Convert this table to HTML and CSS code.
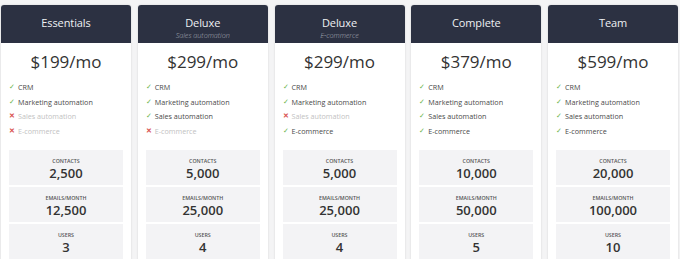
FILE: index.html
```html
<!DOCTYPE html>
<html>
<head>
<meta charset="utf-8">
<link rel="stylesheet" href="styles.css">
</head>
<body>
<div class="plans">
  <div class="card">
    <div class="head"><div class="title">Essentials</div></div>
    <div class="price">$199/mo</div>
    <ul class="features">
      <li class="yes"><span class="mk">✓</span>CRM</li>
      <li class="yes"><span class="mk">✓</span>Marketing automation</li>
      <li class="no"><span class="mk">✕</span>Sales automation</li>
      <li class="no"><span class="mk">✕</span>E-commerce</li>
    </ul>
    <div class="stats">
      <div class="stat"><div class="label">Contacts</div><div class="num">2,500</div></div>
      <div class="stat"><div class="label">Emails/Month</div><div class="num">12,500</div></div>
      <div class="stat"><div class="label">Users</div><div class="num">3</div></div>
    </div>
  </div>
  <div class="card">
    <div class="head"><div class="title">Deluxe</div><div class="sub">Sales automation</div></div>
    <div class="price">$299/mo</div>
    <ul class="features">
      <li class="yes"><span class="mk">✓</span>CRM</li>
      <li class="yes"><span class="mk">✓</span>Marketing automation</li>
      <li class="yes"><span class="mk">✓</span>Sales automation</li>
      <li class="no"><span class="mk">✕</span>E-commerce</li>
    </ul>
    <div class="stats">
      <div class="stat"><div class="label">Contacts</div><div class="num">5,000</div></div>
      <div class="stat"><div class="label">Emails/Month</div><div class="num">25,000</div></div>
      <div class="stat"><div class="label">Users</div><div class="num">4</div></div>
    </div>
  </div>
  <div class="card">
    <div class="head"><div class="title">Deluxe</div><div class="sub">E-commerce</div></div>
    <div class="price">$299/mo</div>
    <ul class="features">
      <li class="yes"><span class="mk">✓</span>CRM</li>
      <li class="yes"><span class="mk">✓</span>Marketing automation</li>
      <li class="no"><span class="mk">✕</span>Sales automation</li>
      <li class="yes"><span class="mk">✓</span>E-commerce</li>
    </ul>
    <div class="stats">
      <div class="stat"><div class="label">Contacts</div><div class="num">5,000</div></div>
      <div class="stat"><div class="label">Emails/Month</div><div class="num">25,000</div></div>
      <div class="stat"><div class="label">Users</div><div class="num">4</div></div>
    </div>
  </div>
  <div class="card">
    <div class="head"><div class="title">Complete</div></div>
    <div class="price">$379/mo</div>
    <ul class="features">
      <li class="yes"><span class="mk">✓</span>CRM</li>
      <li class="yes"><span class="mk">✓</span>Marketing automation</li>
      <li class="yes"><span class="mk">✓</span>Sales automation</li>
      <li class="yes"><span class="mk">✓</span>E-commerce</li>
    </ul>
    <div class="stats">
      <div class="stat"><div class="label">Contacts</div><div class="num">10,000</div></div>
      <div class="stat"><div class="label">Emails/Month</div><div class="num">50,000</div></div>
      <div class="stat"><div class="label">Users</div><div class="num">5</div></div>
    </div>
  </div>
  <div class="card">
    <div class="head"><div class="title">Team</div></div>
    <div class="price">$599/mo</div>
    <ul class="features">
      <li class="yes"><span class="mk">✓</span>CRM</li>
      <li class="yes"><span class="mk">✓</span>Marketing automation</li>
      <li class="yes"><span class="mk">✓</span>Sales automation</li>
      <li class="yes"><span class="mk">✓</span>E-commerce</li>
    </ul>
    <div class="stats">
      <div class="stat"><div class="label">Contacts</div><div class="num">20,000</div></div>
      <div class="stat"><div class="label">Emails/Month</div><div class="num">100,000</div></div>
      <div class="stat"><div class="label">Users</div><div class="num">10</div></div>
    </div>
  </div>
</div>
</body>
</html>
```
FILE: styles.css
```css
html, body {
  margin: 0;
  padding: 0;
  background: #f4f4f5;
  font-family: "Open Sans", "Liberation Sans", sans-serif;
  color: #333;
}
.plans {
  display: grid;
  grid-template-columns: repeat(5, 130px);
  column-gap: 6.75px;
  padding: 5px 0 0 1px;
  align-items: start;
}
.card {
  background: #fff;
  border-radius: 3px;
  box-shadow: 0 0 2px rgba(0, 0, 0, 0.16);
  height: 300px;
}
.head {
  height: 38px;
  box-sizing: border-box;
  padding-top: 11px;
  background: #2c3142;
  border-radius: 3px 3px 0 0;
  display: flex;
  flex-direction: column;
  align-items: center;
  color: #eef0f3;
}
.title {
  font-size: 11px;
  line-height: 13px;
  letter-spacing: -0.1px;
}
.sub {
  margin-top: 2px;
  font-size: 7.2px;
  line-height: 9px;
  font-style: italic;
  font-weight: 300;
  color: #a9adb8;
}
.price {
  height: 37px;
  line-height: 38px;
  text-align: center;
  font-size: 17px;
  color: #333;
}
.features {
  list-style: none;
  margin: 0;
  padding: 0 0 0 8px;
}
.features li {
  font-size: 7.2px;
  line-height: 14.6px;
  height: 14.6px;
  color: #4a4a4a;
  display: flex;
  align-items: center;
}
.features .mk {
  width: 9px;
  font-size: 7px;
}
.features .yes .mk {
  color: #6bb44a;
}
.features .no {
  color: #c2c2c2;
}
.features .no .mk {
  color: #d9534f;
  font-weight: 700;
}
.stats {
  margin: 12px 8px 0;
  display: flex;
  flex-direction: column;
  gap: 2px;
}
.stat {
  height: 35px;
  background: #f3f3f5;
  display: flex;
  flex-direction: column;
  align-items: center;
  padding-top: 7px;
  box-sizing: border-box;
}
.label {
  font-size: 5.3px;
  line-height: 8px;
  text-transform: uppercase;
  font-weight: 600;
  color: #555;
}
.num {
  font-size: 13px;
  line-height: 17px;
  color: #333;
  font-weight: 600;
}
```
